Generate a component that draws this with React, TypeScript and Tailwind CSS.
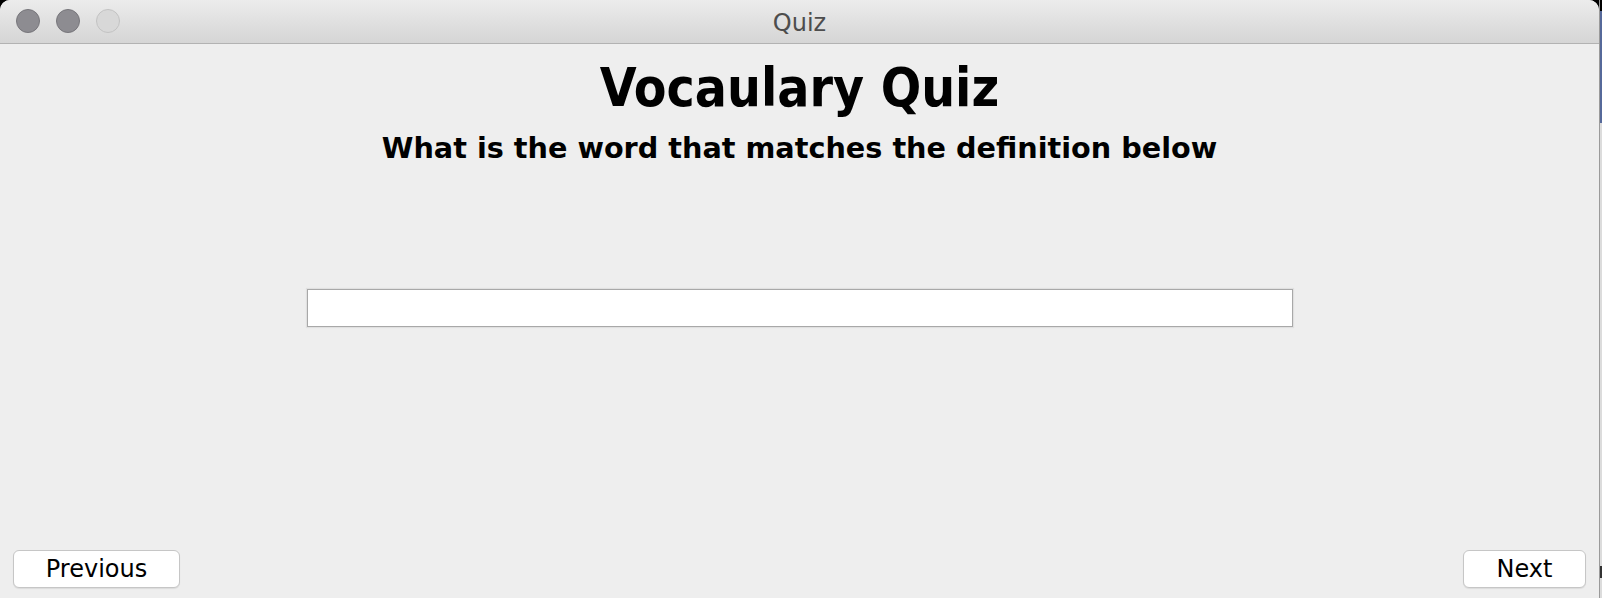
import React from "react"

const sans = { fontFamily: '"DejaVu Sans", "Liberation Sans", sans-serif' }
const condensed = { fontFamily: '"DejaVu Sans Condensed", "DejaVu Sans", sans-serif', fontStretch: "condensed" }

function TrafficLight({ dim }: { dim?: boolean }) {
  return (
    <span
      className={
        dim
          ? "block h-[24px] w-[24px] rounded-full border border-[#c2c2c2] bg-[#d8d8d8]"
          : "block h-[24px] w-[24px] rounded-full border border-[#77767b] bg-[#8d8c91]"
      }
    />
  )
}

function App() {
  return (
    <main className="flex h-[598px] w-full bg-black overflow-hidden" style={sans}>
      <div className="flex w-[1599px] flex-col overflow-hidden rounded-t-[10px] bg-[#eeeeee]">
        {/* title bar */}
        <header className="relative flex h-[44px] shrink-0 items-center border-b border-[#b2b2b2] bg-gradient-to-b from-[#ececec] to-[#d5d5d5]">
          <div className="flex gap-[16px] pl-[16px] pb-[1px]">
            <TrafficLight />
            <TrafficLight />
            <TrafficLight dim />
          </div>
          <span className="absolute left-0 right-0 top-[8px] text-center text-[24px] leading-[30px] text-[#4d4d4d]">
            Quiz
          </span>
        </header>

        {/* content */}
        <section className="flex flex-1 flex-col items-center">
          <h1 className="pt-[17px] text-[53px] font-bold leading-[53px] text-black" style={condensed}>
            Vocaulary Quiz
          </h1>
          <h2 className="mt-[20px] text-[28.7px] font-bold leading-[29px] text-black">
            What is the word that matches the definition below
          </h2>
          <input
            type="text"
            className="mt-[126px] h-[38px] w-[986px] border border-[#a8a8a8] bg-white px-2 shadow-[0_0_1px_1px_rgba(0,0,0,0.06)] outline-none"
          />
        </section>

        <footer className="flex items-center justify-between px-[13px] pb-[10px]">
          <button className="flex h-[38px] w-[167px] items-center justify-center rounded-[6px] border border-[#c6c6c6] bg-white text-[24px] text-black shadow-[0_1px_1px_rgba(0,0,0,0.08)]">
            Previous
          </button>
          <button className="flex h-[38px] w-[123px] items-center justify-center rounded-[6px] border border-[#c6c6c6] bg-white text-[24px] text-black shadow-[0_1px_1px_rgba(0,0,0,0.08)]">
            Next
          </button>
        </footer>
      </div>

      {/* desktop behind the window */}
      <div className="flex w-[3px] flex-col border-l border-[#9a9a9a]">
        <div className="h-[11px] bg-black" />
        <div className="h-[112px] bg-[#56699a]" />
        <div className="flex-1 bg-[#dcdcdc]" />
        <div className="h-[12px] bg-[#333333]" />
        <div className="h-[20px] bg-[#dcdcdc]" />
      </div>
    </main>
  )
}

export default App
